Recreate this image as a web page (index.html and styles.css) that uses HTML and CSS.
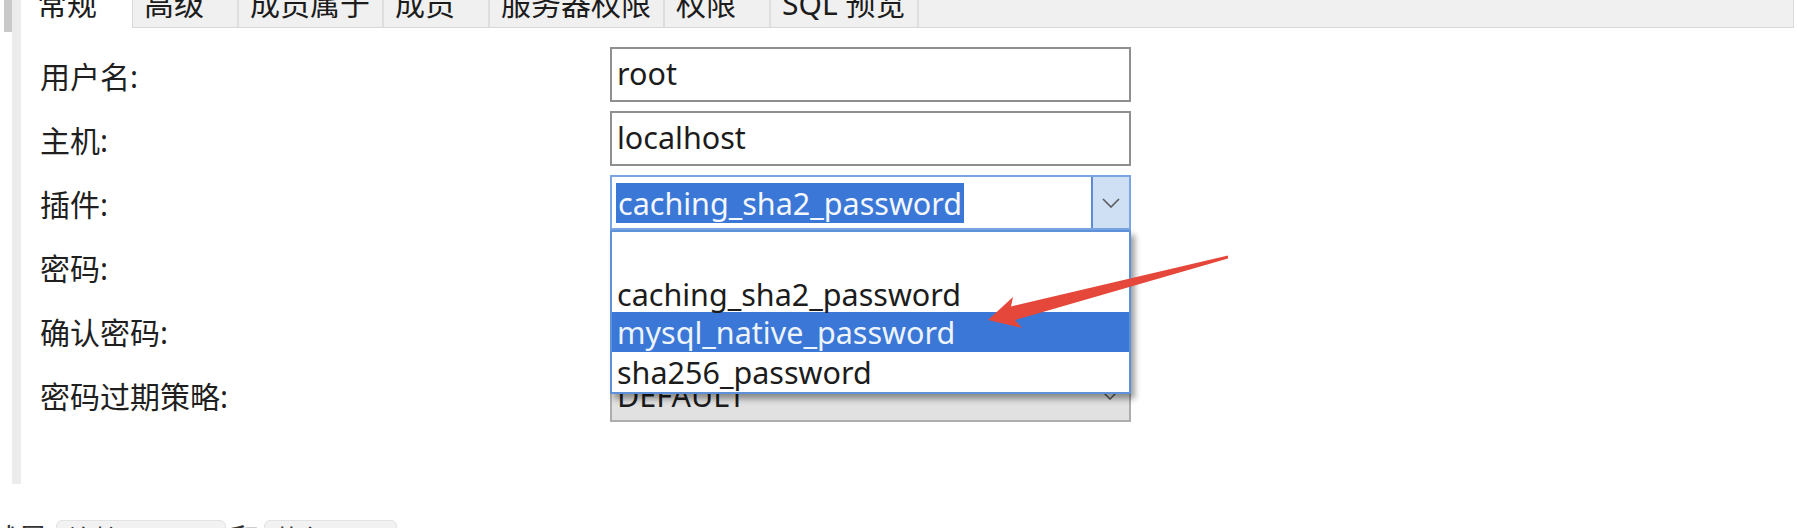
FILE: index.html
```html
<!DOCTYPE html>
<html lang="zh-CN">
<head>
<meta charset="utf-8">
<title>用户</title>
<link rel="stylesheet" href="styles.css">
</head>
<body>
<div class="page">
  <div class="edge">
    <div class="stub"></div>
    <div class="stripe"></div>
  </div>
  <div class="panel">
    <div class="tabs">
      <div class="tab active">常规</div>
      <div class="tab">高级</div>
      <div class="tab">成员属于</div>
      <div class="tab">成员</div>
      <div class="tab">服务器权限</div>
      <div class="tab">权限</div>
      <div class="tab">SQL 预览</div>
    </div>
    <div class="form">
      <div class="label">用户名:</div>
      <div class="field input">root</div>

      <div class="label">主机:</div>
      <div class="field input">localhost</div>

      <div class="label">插件:</div>
      <div class="field select">
        <div class="value"><span class="sel">caching_sha2_password</span></div>
        <div class="btn">
          <svg width="18" height="10" viewBox="0 0 18 10"><path d="M1 1 L9 9 L17 1" fill="none" stroke="#5a5a5a" stroke-width="1.6"/></svg>
        </div>
        <ul class="dropdown">
          <li class="opt"></li>
          <li class="opt">caching_sha2_password</li>
          <li class="opt hi">mysql_native_password</li>
          <li class="opt">sha256_password</li>
        </ul>
      </div>

      <div class="label">密码:</div>
      <div class="field input"></div>

      <div class="label">确认密码:</div>
      <div class="field input"></div>

      <div class="label">密码过期策略:</div>
      <div class="field combo">
        <div class="value">DEFAULT</div>
        <div class="cbtn">
          <svg width="18" height="10" viewBox="0 0 18 10"><path d="M1 1 L9 9 L17 1" fill="none" stroke="#5a5a5a" stroke-width="1.6"/></svg>
        </div>
      </div>
    </div>
  </div>
</div>
<div class="footer">
  <span class="cut">就是</span><span class="code">连接 MySQL</span><span>和</span><span class="code">执行 SQL</span>
</div>
<svg class="arrow" width="1798" height="528" viewBox="0 0 1798 528">
  <polygon points="1228,255.5 1011,306.5 1013,297 988,320 1022,328 1015,320 1228,258.5" fill="#e5473a"/>
</svg>
</body>
</html>
```

FILE: styles.css
```css
* { box-sizing: border-box; }

html, body {
  margin: 0;
  padding: 0;
}

body {
  position: relative;
  width: 1798px;
  height: 528px;
  overflow: hidden;
  background: #ffffff;
  font-family: "Noto Sans", "Noto Sans CJK SC", sans-serif;
  font-size: 30px;
  color: #1c1c1c;
}

.page {
  display: flex;
  height: 484px;
}

.edge {
  display: flex;
  padding-left: 4px;
  width: 21px;
  flex: none;
}

.stub {
  width: 8px;
  height: 32px;
  background: #c9c9c9;
}

.stripe {
  width: 9px;
  height: 484px;
  background: #ececec;
}

.panel {
  flex: 1;
  margin-right: 4px;
  display: flex;
  flex-direction: column;
}

.tabs {
  display: flex;
  height: 46px;
  margin-top: -18px;
  background: #f0f0f0;
  border-bottom: 1px solid #d8d8d8;
  border-right: 1px solid #dcdcdc;
}

.tab {
  min-width: 106px;
  padding: 0 12px 0 11px;
  line-height: 44px;
  border-right: 2px solid #dedede;
  white-space: nowrap;
  color: #1c1c1c;
}

.tab.active {
  min-width: 112px;
  padding-left: 16px;
  background: #ffffff;
  margin-bottom: -1px;
  border-right: 1px solid #d8d8d8;
}

.form {
  display: grid;
  grid-template-columns: 570px 521px;
  grid-auto-rows: 55px;
  row-gap: 9px;
  padding: 19px 0 0 19px;
}

.label {
  display: flex;
  align-items: center;
  color: #1f1f1f;
}

.field {
  position: relative;
  display: flex;
  align-items: center;
  background: #fff;
  font-size: 30.5px;
}

.input {
  border: 2px solid #8f8f8f;
  padding-left: 5px;
  padding-bottom: 4px;
}

.select {
  border: 2px solid #79a5e3;
  padding-left: 4px;
  z-index: 2;
}

.select .value {
  flex: 1;
  display: flex;
  align-items: center;
}

.sel {
  background: #3a77d6;
  color: #f4f8fe;
  line-height: 40px;
  padding: 0 2px;
}

.btn {
  align-self: stretch;
  width: 38px;
  background: #cfe0f4;
  border-left: 2px solid #5c8cd4;
  display: flex;
  align-items: center;
  justify-content: center;
}

.dropdown {
  position: absolute;
  top: calc(100% + 2px);
  left: -2px;
  right: -2px;
  margin: 0;
  padding: 0;
  list-style: none;
  background: #fff;
  border: 2px solid #5f91db;
  box-shadow: 4px 5px 6px rgba(0, 0, 0, 0.38);
}

.opt {
  height: 40px;
  line-height: 40px;
  padding-left: 5px;
  color: #1c1c1c;
  white-space: nowrap;
}

.opt:nth-child(2) {
  line-height: 44px;
}

.opt.hi {
  background: #3a77d6;
  color: #eef4fc;
}

.combo {
  background: #e1e1e1;
  border: 2px solid #adadad;
  padding-left: 5px;
}

.combo .value {
  flex: 1;
  color: #1c1c1c;
}

.cbtn {
  width: 38px;
  display: flex;
  justify-content: center;
}

.footer {
  margin-top: 35px;
  line-height: 40px;
  font-size: 30px;
  color: #333;
  white-space: nowrap;
  display: flex;
  align-items: center;
}

.cut {
  margin-left: -12px;
  margin-right: 4px;
}

.code {
  background: #f2f2f2;
  border: 1px solid #e3e3e3;
  border-radius: 6px;
  padding: 0 12px;
  margin: 0 4px;
  font-size: 26px;
  line-height: 36px;
}

.arrow {
  position: absolute;
  left: 0;
  top: 0;
  pointer-events: none;
  z-index: 5;
}
```
